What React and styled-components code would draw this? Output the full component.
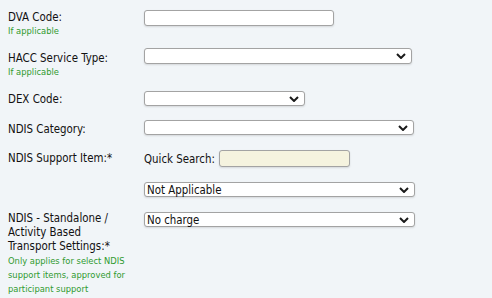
import React from "react";
import styled, { createGlobalStyle } from "styled-components";

const Global = createGlobalStyle`
  html, body { margin: 0; padding: 0; background: #f1f5f8; }
  body { font-family: "DejaVu Sans Condensed", "DejaVu Sans", sans-serif; color: #111; }
`;

const Form = styled.div`
  display: grid;
  grid-template-columns: 136px 1fr;
  padding: 10px 0 0 8px;
  width: 484px;
  box-sizing: border-box;
`;

const Label = styled.div`
  font-size: 11.4px;
  line-height: 14px;
  padding-top: ${(p) => p.$pt || 0}px;
`;

const Hint = styled.div`
  color: #2f9a2f;
  font-size: 9.3px;
  line-height: 14px;
  margin-top: ${(p) => p.$mt || 0}px;
`;

const Group = styled.div`
  padding-top: ${(p) => p.$pt || 0}px;
`;

const Cell = styled.div`
  display: flex;
  align-items: center;
  align-self: start;
  gap: 4px;
  padding-top: ${(p) => p.$pt || 0}px;
  font-size: 11.4px;
`;

const TextInput = styled.input`
  box-sizing: border-box;
  width: ${(p) => p.$w}px;
  height: ${(p) => p.$h || 16}px;
  border: 1px solid #a3a3a3;
  border-radius: 3px;
  background: ${(p) => p.$bg || "#fff"};
  box-shadow: 0 1px 2px rgba(0, 0, 0, 0.12);
  padding: 0 3px;
  margin: 0;
  outline: none;
`;

const SelectWrap = styled.div`
  position: relative;
  width: ${(p) => p.$w}px;
  height: ${(p) => p.$h || 16}px;
  box-sizing: border-box;
  border: 1px solid #a3a3a3;
  border-radius: 3px;
  background: #fff;
  box-shadow: 0 1px 2px rgba(0, 0, 0, 0.12);
  font-size: 11.4px;
  line-height: 14px;
  padding-left: 2px;
  display: flex;
  align-items: center;
`;

const Chevron = styled.svg`
  position: absolute;
  right: 5px;
  top: 50%;
  margin-top: -3px;
  width: 10px;
  height: 6px;
`;

const Select = ({ w, h, value }) => (
  <SelectWrap $w={w} $h={h}>
    {value}
    <Chevron viewBox="0 0 10 6">
      <path d="M1 1 L5 5 L9 1" fill="none" stroke="#1a1a1a" strokeWidth="2" />
    </Chevron>
  </SelectWrap>
);

export default function App() {
  return (
    <>
      <Global />
      <Form>
        <Group>
          <Label>DVA Code:</Label>
          <Hint>If applicable</Hint>
        </Group>
        <Cell>
          <TextInput $w={190} />
        </Cell>

        <Group $pt={13}>
          <Label>HACC Service Type:</Label>
          <Hint>If applicable</Hint>
        </Group>
        <Cell $pt={10}>
          <Select w={268} h={16} />
        </Cell>

        <Label $pt={13}>DEX Code:</Label>
        <Cell $pt={12}>
          <Select w={161} h={15} />
        </Cell>

        <Label $pt={16}>NDIS Category:</Label>
        <Cell $pt={14}>
          <Select w={270} h={15} />
        </Cell>

        <Label $pt={15}>NDIS Support Item:*</Label>
        <Cell $pt={14}>
          Quick Search:
          <TextInput $w={131} $h={17} $bg="#f5f3df" />
        </Cell>

        <div />
        <Cell $pt={15}>
          <Select w={271} h={15} value="Not Applicable" />
        </Cell>

        <Group $pt={14}>
          <Label>NDIS - Standalone /<br />Activity Based<br />Transport Settings:*</Label>
          <Hint $mt={1}>Only applies for select NDIS<br />support items, approved for<br />participant support</Hint>
        </Group>
        <Cell $pt={15}>
          <Select w={271} h={15} value="No charge" />
        </Cell>
      </Form>
    </>
  );
}
